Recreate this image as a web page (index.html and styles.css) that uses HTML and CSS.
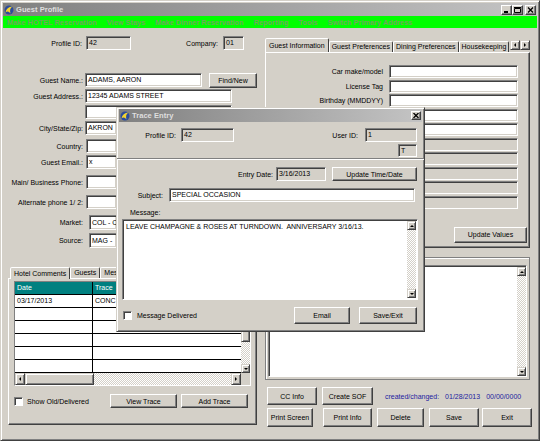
FILE: index.html
```html
<!DOCTYPE html>
<html>
<head>
  <title>Guest Profile</title>
  <link rel="stylesheet" href="styles.css">
</head>
<body>
  <div class="window">
    <div class="titlebar">
      <svg class="app-icon" width="10" height="10" viewBox="0 0 10 10">
        <circle cx="5" cy="5" r="4.5" fill="#2c4c9c"/>
        <path d="M1.5 7.5 Q2.5 2 8.5 1.5 Q5 3.5 6.5 8.5 Q4 5 1.5 7.5Z" fill="#f2d230"/>
      </svg>
      <span>Guest Profile</span>
      <div class="caption-btns">
        <span class="cbtn"><svg width="7" height="6" viewBox="0 0 7 6"><path d="M1 4h4v2H1z" fill="#000"/></svg></span>
        <span class="cbtn"><svg width="7" height="6" viewBox="0 0 7 6"><path d="M0.5 1.5h6v4h-6z" fill="none" stroke="#000"/><path d="M0 0h7v1H0z" fill="#000"/></svg></span>
        <span class="cbtn close"><svg width="7" height="6" viewBox="0 0 7 6"><path d="M1 0.5l5 5M6 0.5l-5 5" stroke="#000" stroke-width="1.3"/></svg></span>
      </div>
    </div>

    <div class="menubar">
      <span>Make HOTEL Reservation</span>
      <span>View Stays</span>
      <span>Make Dinner Reservation</span>
      <span>Reporting</span>
      <span>Tools</span>
      <span>Switch Primary Address</span>
    </div>

    <div class="client">
      <div class="left-col">
        <div class="id-row">
          <span class="lbl lbl-profile">Profile ID:</span>
          <div class="field off f-profile">42</div>
          <span class="lbl lbl-company">Company:</span>
          <div class="field off f-company">01</div>
        </div>

        <div class="guest-form">
          <div class="frow">
            <span class="lbl">Guest Name.:</span>
            <div class="field f-name">ADAMS, AARON</div>
            <div class="btn find">Find/New</div>
          </div>
          <div class="frow">
            <span class="lbl">Guest Address.:</span>
            <div class="field f-addr">12345 ADAMS STREET</div>
          </div>
          <div class="frow">
            <span class="lbl"></span>
            <div class="field f-addr"></div>
          </div>
          <div class="frow">
            <span class="lbl">City/State/Zip:</span>
            <div class="field f-city">AKRON</div>
          </div>
          <div class="frow mid">
            <span class="lbl">Country:</span>
            <div class="field f-short"></div>
          </div>
          <div class="frow">
            <span class="lbl">Guest Email.:</span>
            <div class="field f-short">x</div>
          </div>
          <div class="frow loose">
            <span class="lbl">Main/ Business Phone:</span>
            <div class="field f-short"></div>
          </div>
          <div class="frow loose">
            <span class="lbl">Alternate phone 1/ 2:</span>
            <div class="field f-short"></div>
          </div>
          <div class="frow loose tall">
            <span class="lbl">Market:</span>
            <div class="field combo">COL - C</div>
          </div>
          <div class="frow mid tall">
            <span class="lbl">Source:</span>
            <div class="field combo">MAG -</div>
          </div>
        </div>

        <div class="comments">
          <div class="tabs">
            <span class="tab on">Hotel Comments</span>
            <span class="tab">Guests</span>
            <span class="tab">Mes</span>
          </div>
          <div class="pane comments-pane">
            <div class="grid">
              <div class="grid-main">
                <div class="grid-body">
                  <div class="grow head"><div class="c1">Date</div><div class="c2">Trace</div></div>
                  <div class="grow"><div class="c1">03/17/2013</div><div class="c2">CONC</div></div>
                  <div class="grow"><div class="c1"></div><div class="c2"></div></div>
                  <div class="grow"><div class="c1"></div><div class="c2"></div></div>
                  <div class="grow"><div class="c1"></div><div class="c2"></div></div>
                  <div class="grow"><div class="c1"></div><div class="c2"></div></div>
                  <div class="grow"><div class="c1"></div><div class="c2"></div></div>
                </div>
                <div class="vscroll">
                  <span class="sb up"></span>
                  <span class="sb thumb-v"></span>
                  <span class="track"></span>
                  <span class="sb down"></span>
                </div>
              </div>
              <div class="hscroll">
                <span class="sb left"></span>
                <span class="sb thumb-h"></span>
                <span class="track"></span>
                <span class="sb right"></span>
                <span class="corner"></span>
              </div>
            </div>
            <div class="trace-actions">
              <span class="check"></span>
              <span>Show Old/Delivered</span>
              <div class="trace-btns">
                <div class="btn trace-btn">View Trace</div>
                <div class="btn trace-btn">Add Trace</div>
              </div>
            </div>
          </div>
        </div>
      </div>

      <div class="right-col">
        <div class="info">
          <div class="tabs info-tabs">
            <div class="tab-strip">
              <span class="tab on">Guest Information</span>
              <span class="tab">Guest Preferences</span>
              <span class="tab">Dining Preferences</span>
              <span class="tab">Housekeeping</span>
            </div>
            <div class="tab-arrows">
              <span class="sb left"></span>
              <span class="sb right"></span>
            </div>
          </div>
          <div class="pane info-pane">
            <div class="info-grid">
              <span class="lbl">Car make/model</span><div class="field"></div>
              <span class="lbl">License Tag</span><div class="field"></div>
              <span class="lbl">Birthday (MMDDYY)</span><div class="field"></div>
              <span class="lbl"></span><div class="field"></div>
              <span class="lbl"></span><div class="field"></div>
              <span class="lbl"></span><div class="field off"></div>
              <span class="lbl"></span><div class="field off"></div>
              <span class="lbl"></span><div class="field off"></div>
              <span class="lbl"></span><div class="field off"></div>
              <span class="lbl"></span><div class="field off"></div>
            </div>
            <div class="update-row">
              <div class="btn update">Update Values</div>
            </div>
          </div>
        </div>

        <div class="notes">
          <div class="memo">
            <div class="memo-text"></div>
            <div class="vscroll">
              <span class="sb up"></span>
              <span class="track"></span>
              <span class="sb down"></span>
            </div>
          </div>
        </div>

        <div class="btn-row">
          <div class="btn b-cc">CC Info</div>
          <div class="btn b-sof">Create SOF</div>
          <div class="stamp">
            <span>created/changed:</span>
            <span>01/28/2013</span>
            <span>00/00/0000</span>
          </div>
        </div>
        <div class="btn-row second">
          <div class="btn b-print">Print Screen</div>
          <div class="btn b-info">Print Info</div>
          <div class="btn b-delete">Delete</div>
          <div class="btn b-save">Save</div>
          <div class="btn b-exit">Exit</div>
        </div>
      </div>
    </div>

    <div class="dialog">
      <div class="titlebar d-title">
        <svg class="app-icon" width="10" height="10" viewBox="0 0 10 10">
          <circle cx="5" cy="5" r="4.5" fill="#2c4c9c"/>
          <path d="M1.5 7.5 Q2.5 2 8.5 1.5 Q5 3.5 6.5 8.5 Q4 5 1.5 7.5Z" fill="#f2d230"/>
        </svg>
        <span>Trace Entry</span>
        <span class="cbtn d-close"><svg width="6" height="5" viewBox="0 0 6 5"><path d="M0.5 0l5 5M5.5 0l-5 5" stroke="#000" stroke-width="1.3"/></svg></span>
      </div>

      <div class="d-ids">
        <span class="lbl d-lbl-profile">Profile ID:</span>
        <div class="field off d-f-profile">42</div>
        <span class="lbl d-lbl-user">User ID:</span>
        <div class="field off d-f-user">1</div>
      </div>
      <div class="d-t">
        <div class="field off d-f-t">T</div>
      </div>
      <div class="sep"></div>
      <div class="d-entry">
        <span class="lbl">Entry Date:</span>
        <div class="field off d-f-date">3/16/2013</div>
        <div class="btn d-update">Update Time/Date</div>
      </div>
      <div class="d-subject">
        <span class="lbl d-lbl-subject">Subject:</span>
        <div class="field d-f-subject">SPECIAL OCCASION</div>
      </div>
      <div class="d-msg-lbl">Message:</div>
      <div class="d-memo">
        <div class="memo-text">LEAVE CHAMPAGNE &amp; ROSES AT TURNDOWN.  ANNIVERSARY 3/16/13.</div>
        <div class="vscroll">
          <span class="sb up"></span>
          <span class="track"></span>
          <span class="sb down"></span>
        </div>
      </div>
      <div class="d-bottom">
        <span class="check"></span>
        <span class="d-check-lbl">Message Delivered</span>
        <div class="btn d-email">Email</div>
        <div class="btn d-save">Save/Exit</div>
      </div>
    </div>
  </div>
</body>
</html>
```

FILE: styles.css
```css
* {
  box-sizing: border-box;
}
body {
  margin: 0;
  font-family: "Liberation Sans", Arial, sans-serif;
  font-size: 7px;
  color: #000;
}

/* window frame */
.window {
  position: relative;
  width: 540px;
  height: 441px;
  padding: 2px;
  background: #d4d0c8;
  border: 1px solid;
  border-color: #d4d0c8 #404040 #404040 #d4d0c8;
  box-shadow: inset 1px 1px #fff, inset -1px -1px #808080;
  display: flex;
  flex-direction: column;
  overflow: hidden;
}
.titlebar {
  height: 13px;
  flex: none;
  display: flex;
  align-items: center;
  padding: 0 1px 0 0;
  background: linear-gradient(to right, #808080, #c4c4c4);
  color: #dedede;
  font-weight: bold;
  font-size: 7.6px;
  white-space: nowrap;
}
.app-icon {
  margin: 0 2px 0 1px;
  flex: none;
}
.caption-btns {
  margin-left: auto;
  display: flex;
}
.cbtn {
  width: 11px;
  height: 10px;
  background: #d4d0c8;
  border: 1px solid;
  border-color: #fff #404040 #404040 #fff;
  box-shadow: inset -1px -1px #808080;
  display: flex;
  align-items: center;
  justify-content: center;
}
.cbtn.close {
  margin-left: 2px;
}
.menubar {
  height: 12px;
  flex: none;
  display: flex;
  align-items: center;
  gap: 10px;
  padding-left: 4px;
  background: #00ff00;
  color: #6fa85c;
  font-weight: bold;
  font-size: 7.4px;
  white-space: nowrap;
}

/* common controls */
.lbl {
  white-space: nowrap;
  text-align: right;
}
.field {
  height: 14px;
  flex: none;
  background: #fff;
  border: 1px solid;
  border-color: #808080 #fff #fff #808080;
  box-shadow: inset 1px 1px #404040, inset -1px -1px #d4d0c8;
  padding: 0 2px;
  line-height: 12px;
  white-space: nowrap;
  overflow: hidden;
}
.field.off {
  background: #d4d0c8;
}
.btn {
  flex: none;
  display: flex;
  align-items: center;
  justify-content: center;
  background: #d4d0c8;
  border: 1px solid;
  border-color: #fff #404040 #404040 #fff;
  box-shadow: inset -1px -1px #808080;
  white-space: nowrap;
}
.check {
  width: 9px;
  height: 9px;
  flex: none;
  background: #fff;
  border: 1px solid;
  border-color: #808080 #fff #fff #808080;
  box-shadow: inset 1px 1px #404040;
}
.sb {
  flex: none;
  background: #d4d0c8;
  border: 1px solid;
  border-color: #d4d0c8 #404040 #404040 #d4d0c8;
  box-shadow: inset 1px 1px #fff, inset -1px -1px #808080;
  display: flex;
  align-items: center;
  justify-content: center;
}
.sb.up::after,
.sb.down::after,
.sb.left::after,
.sb.right::after {
  content: "";
  border: 2px solid transparent;
}
.sb.up::after {
  border-top: 0;
  border-bottom-color: #000;
}
.sb.down::after {
  border-bottom: 0;
  border-top-color: #000;
}
.sb.left::after {
  border-left: 0;
  border-right-color: #000;
}
.sb.right::after {
  border-right: 0;
  border-left-color: #000;
}
.track {
  flex: 1;
  background: repeating-conic-gradient(#fff 0 25%, #d4d0c8 0 50%) 0 0 / 2px 2px;
}
.vscroll {
  width: 9px;
  flex: none;
  display: flex;
  flex-direction: column;
}
.vscroll .sb.up,
.vscroll .sb.down {
  height: 9px;
}
.tabs {
  display: flex;
  align-items: flex-end;
}
.tab {
  height: 11px;
  padding: 0 2px;
  line-height: 10px;
  border: 1px solid;
  border-bottom: 0;
  border-color: #fff #404040 transparent #fff;
  border-radius: 2px 2px 0 0;
  white-space: nowrap;
}
.tab.on {
  height: 13px;
  padding: 0 3px;
  margin-bottom: -1px;
  line-height: 11px;
  background: #d4d0c8;
  position: relative;
  z-index: 1;
}
.pane {
  border: 1px solid;
  border-color: #fff #404040 #404040 #fff;
  box-shadow: inset -1px -1px #808080;
}

/* client area */
.client {
  flex: 1;
  display: flex;
}
.left-col {
  width: 262px;
  flex: none;
  display: flex;
  flex-direction: column;
}
.id-row {
  display: flex;
  align-items: center;
  height: 14px;
  margin-top: 8px;
}
.lbl-profile {
  width: 79px;
  margin-right: 4px;
}
.f-profile {
  width: 45px;
}
.lbl-company {
  width: 87px;
  margin-right: 5px;
}
.f-company {
  width: 21px;
}
.guest-form {
  margin-top: 21px;
}
.frow {
  display: flex;
  align-items: center;
  height: 14px;
  margin-top: 2px;
}
.frow.mid {
  margin-top: 4px;
}
.frow.loose {
  margin-top: 6px;
}
.frow.tall .field {
  height: 15px;
  line-height: 13px;
}
.frow .lbl {
  width: 80px;
  margin-right: 2px;
}
.f-name {
  width: 117px;
}
.f-addr {
  width: 147px;
}
.f-city {
  width: 32px;
}
.f-short {
  width: 31px;
  margin-left: 1px;
}
.combo {
  width: 28px;
  margin-left: 4px;
}
.find {
  width: 48px;
  height: 15px;
  margin-left: 7px;
}

.comments {
  width: 249px;
  margin: 19px 0 0 5px;
}
.comments .tabs {
  height: 12px;
  padding-left: 2px;
}
.comments .tab {
  padding: 0 3px;
}
.comments .tab.on {
  height: 12px;
}
.comments-pane {
  height: 147px;
  padding: 2px 5px;
}
.grid {
  width: 237px;
  height: 105px;
  border: 1px solid;
  border-color: #808080 #fff #fff #808080;
}
.grid-main {
  display: flex;
  height: 91px;
}
.grid-body {
  flex: 1;
  overflow: hidden;
}
.grow {
  display: flex;
  height: 13px;
  line-height: 12px;
  background: #fff;
  border-bottom: 1px solid #000;
  white-space: nowrap;
}
.grow.head {
  background: #008080;
  color: #fff;
}
.grow .c1 {
  width: 78px;
  flex: none;
  padding-left: 2px;
  border-right: 1px solid #000;
}
.grow .c2 {
  flex: 1;
  padding-left: 2px;
}
.thumb-v {
  height: 51px;
}
.hscroll {
  display: flex;
  height: 12px;
}
.hscroll .sb.left,
.hscroll .sb.right {
  width: 10px;
}
.thumb-h {
  width: 69px;
}
.corner {
  width: 9px;
  background: #d4d0c8;
}
.trace-actions {
  display: flex;
  align-items: center;
  height: 14px;
  margin-top: 8px;
}
.trace-actions .check {
  margin-right: 4px;
}
.trace-btns {
  margin-left: auto;
  margin-right: 3px;
  display: flex;
  gap: 4px;
}
.trace-btn {
  width: 67px;
  height: 14px;
}

.right-col {
  flex: 1;
  display: flex;
  flex-direction: column;
  padding-top: 10px;
}
.info {
  width: 265px;
}
.info-tabs {
  height: 14px;
}
.tab-strip {
  display: flex;
  align-items: flex-end;
  width: 246px;
  height: 14px;
  overflow: hidden;
}
.tab-strip .tab.on {
  height: 15px;
  line-height: 13px;
}
.tab-arrows {
  display: flex;
  align-self: flex-start;
  margin-top: 2px;
}
.tab-arrows .sb {
  width: 10px;
  height: 10px;
}
.info-pane {
  height: 196px;
  padding-top: 12px;
}
.info-grid {
  display: grid;
  grid-template-columns: 117px 129px;
  grid-auto-rows: 13px;
  column-gap: 6px;
  row-gap: 1.5px;
  align-items: center;
}
.info-grid .field {
  height: 13px;
  line-height: 11px;
}
.update-row {
  display: flex;
  justify-content: flex-end;
  margin-top: 18px;
  padding-right: 2px;
}
.update {
  width: 73px;
  height: 16px;
}
.notes {
  width: 265px;
  height: 123px;
  margin-top: 9px;
  padding: 7px 2px 2px;
  border: 1px solid #808080;
  box-shadow: inset 1px 1px #fff;
}
.memo {
  height: 100%;
  display: flex;
  background: #fff;
  border: 1px solid;
  border-color: #808080 #fff #fff #808080;
  box-shadow: inset 1px 1px #404040;
  padding: 1px 0 0 1px;
}
.memo-text {
  flex: 1;
  padding: 2px;
  white-space: pre-wrap;
}
.btn-row {
  display: flex;
  height: 18px;
  margin-top: 7px;
  padding-left: 2px;
}
.btn-row.second {
  height: 19px;
  margin-top: 3px;
}
.b-cc {
  width: 50px;
}
.b-sof {
  width: 51px;
  margin-left: 5px;
}
.stamp {
  display: flex;
  align-items: center;
  gap: 6px;
  margin-left: 12px;
  color: #1c1ca0;
  white-space: nowrap;
}
.b-print {
  width: 46px;
}
.b-info {
  width: 49px;
  margin-left: 10px;
}
.b-delete {
  width: 47px;
  margin-left: 5px;
}
.b-save {
  width: 50px;
  margin-left: 5px;
}
.b-exit {
  width: 50px;
  margin-left: 3px;
}

/* trace entry dialog, floating over the profile */
.dialog {
  position: absolute;
  left: 115px;
  top: 106px;
  width: 309px;
  height: 225px;
  padding: 1px 2px 2px;
  background: #d4d0c8;
  border: 1px solid;
  border-color: #d4d0c8 #404040 #404040 #d4d0c8;
  box-shadow: inset 1px 1px #fff, inset -1px -1px #808080;
  display: flex;
  flex-direction: column;
}
.d-close {
  width: 10px;
  height: 9px;
  margin-left: auto;
}
.d-ids {
  display: flex;
  align-items: center;
  height: 14px;
  margin-top: 6px;
}
.d-lbl-profile {
  width: 57px;
  margin-right: 5px;
}
.d-f-profile {
  width: 53px;
}
.d-lbl-user {
  width: 124px;
  margin-right: 7px;
}
.d-f-user {
  width: 52px;
}
.d-t {
  display: flex;
  justify-content: flex-end;
  margin-top: 2px;
  padding-right: 5px;
}
.d-f-t {
  width: 19px;
  height: 13px;
  line-height: 11px;
}
.sep {
  height: 2px;
  margin: 1px -2px 0;
  border-top: 1px solid #808080;
  border-bottom: 1px solid #fff;
}
.d-entry {
  display: flex;
  align-items: center;
  justify-content: flex-end;
  height: 14px;
  margin-top: 7px;
  padding-right: 5px;
}
.d-entry .lbl {
  margin-right: 3px;
}
.d-f-date {
  width: 50px;
}
.d-update {
  width: 85px;
  height: 14px;
  margin-left: 6px;
}
.d-subject {
  display: flex;
  align-items: center;
  height: 14px;
  margin-top: 7px;
}
.d-lbl-subject {
  width: 44px;
  margin-right: 6px;
}
.d-f-subject {
  width: 246px;
}
.d-msg-lbl {
  height: 10px;
  margin-top: 6px;
  padding-left: 11px;
  line-height: 10px;
}
.d-memo {
  display: flex;
  width: 296px;
  height: 81px;
  margin: 1px 0 0 3px;
  background: #fff;
  border: 1px solid;
  border-color: #808080 #fff #fff #808080;
  box-shadow: inset 1px 1px #404040;
  padding: 1px;
}
.d-bottom {
  display: flex;
  align-items: center;
  height: 18px;
  margin-top: 6px;
  padding: 0 5px 0 4px;
}
.d-check-lbl {
  margin-left: 5px;
}
.d-email {
  width: 56px;
  height: 17px;
  margin-left: auto;
}
.d-save {
  width: 58px;
  height: 17px;
  margin-left: 9px;
}
```
